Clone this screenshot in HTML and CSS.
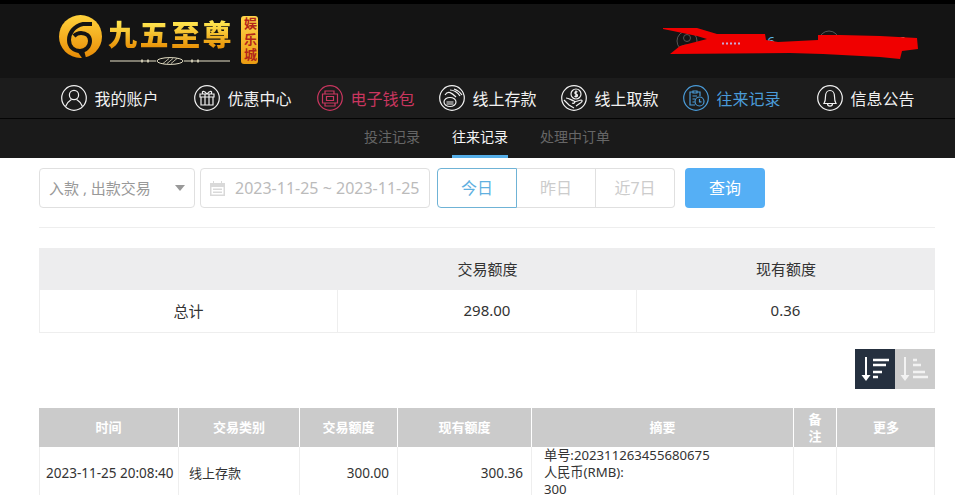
FILE: index.html
```html
<!DOCTYPE html>
<html lang="zh-CN">
<head>
    <meta charset="UTF-8">
    <title>往来记录</title>
    <link rel="stylesheet" href="styles.css">
</head>
<body>
    <header class="top">
        <div class="brand">
            <svg class="brand-mark" viewBox="0 0 43 43" width="43" height="43">
                <defs>
                    <linearGradient id="gold" x1="0" y1="0" x2="0" y2="1">
                        <stop offset="0" stop-color="#ffd23c"/>
                        <stop offset="1" stop-color="#e88c06"/>
                    </linearGradient>
                </defs>
                <circle cx="21.5" cy="21.5" r="21.5" fill="url(#gold)"/>
                <path d="M33 9H24C15 11 10 18 10 25C10 32 15 36 21 36C27 36 31 31 31 26C31 21 27 18 22 18C19 18 17 19 15 21" fill="none" stroke="#141414" stroke-width="4"/>
                <path d="M18 36L23 43H27L25 35Z" fill="#141414"/>
            </svg>
            <div class="brand-name">
                <div class="brand-text">九五至尊</div>
                <svg class="brand-flourish" viewBox="0 0 124 8" width="124" height="8">
                    <path d="M2 4H48M76 4H122" stroke="#e8e2c8" stroke-width="1"/>
                    <path d="M34 2.500V5.500M40 2.500V5.500M84 2.500V5.500M90 2.500V5.500" stroke="#e8e2c8" stroke-width="1.500"/>
                    <ellipse cx="62" cy="4" rx="13" ry="3.400" fill="none" stroke="#e8e2c8" stroke-width="1"/>
                    <path d="M55 6.500L61 1.500M59 6.500L65 1.500M63 6.500L69 1.500" stroke="#e8e2c8" stroke-width="0.800"/>
                </svg>
            </div>
            <div class="brand-badge">娱乐城</div>
        </div>
        <div class="user-info">
            <svg class="user-icon" viewBox="0 0 22 22" width="22" height="22">
                <circle cx="11" cy="11" r="10" fill="none" stroke="#555"/>
                <circle cx="11" cy="8" r="3.500" fill="none" stroke="#555"/>
                <path d="M4 18C5 14 17 14 18 18" fill="none" stroke="#555"/>
            </svg>
            <span class="user-name">c.....6</span>
            <svg class="user-icon user-icon-wallet" viewBox="0 0 22 22" width="22" height="22">
                <circle cx="11" cy="11" r="10" fill="none" stroke="#555"/>
            </svg>
            <span class="user-money">0.36</span>
        </div>
        <svg class="scribble" viewBox="660 24 262 38" width="262" height="38">
            <path d="M663 28L697 28L717 34L765 34L766 40L778 42L818 40L818 35L840 35L880 36L917 38L918 49L902 51L900 59L880 57L823 54L790 53L670 54L680 46L707 39L697 36L673 31L663 29Z" fill="#f00000"/>
            <path d="M722 43.500H741" stroke="#c9a8d4" stroke-width="2" stroke-dasharray="2 2"/>
        </svg>
    </header>

    <nav class="main-nav">
        <a class="nav-item" href="#">
            <svg viewBox="0 0 26 26" width="26" height="26">
                <circle cx="13" cy="13" r="12.300"/>
                <circle cx="13" cy="10" r="4.600"/>
                <path d="M4.500 21.500C6 17 9 15.500 10.500 14.500M21.500 21.500C20 17 17 15.500 15.500 14.500"/>
            </svg>
            我的账户
        </a>
        <a class="nav-item" href="#">
            <svg viewBox="0 0 26 26" width="26" height="26">
                <circle cx="13" cy="13" r="12.300"/>
                <path d="M6 9H20V12H6ZM7 12V20H19V12M11 9V20M15 9V20M13 9C10 5 7 6 9 9M13 9C16 5 19 6 17 9"/>
            </svg>
            优惠中心
        </a>
        <a class="nav-item nav-item-wallet" href="#">
            <svg viewBox="0 0 26 26" width="26" height="26">
                <circle cx="13" cy="13" r="12.300"/>
                <path d="M8 9V6H17V9M5.500 9H20.500V18H5.500ZM8 18V21H18V18M9.500 11.500H16.500V15.500H9.500Z"/>
            </svg>
            电子钱包
        </a>
        <a class="nav-item" href="#">
            <svg viewBox="0 0 26 26" width="26" height="26">
                <circle cx="13" cy="13" r="12.300"/>
                <ellipse cx="11" cy="17" rx="6" ry="4.500"/>
                <path d="M7.500 17H14.500M7.500 19H14.500M6 10C9 5 13 8 17 12M11 5C14 5 19 7 21 11M15 4C18 5 21 7 23 10"/>
            </svg>
            线上存款
        </a>
        <a class="nav-item" href="#">
            <svg viewBox="0 0 26 26" width="26" height="26">
                <circle cx="13" cy="13" r="12.300"/>
                <circle cx="15" cy="9" r="5"/>
                <path d="M16.500 7C15 6 13.500 7 14 8.500C15 9.500 17 9 16.500 11C15.500 12 14 11.500 13.500 11M15 5.500V12.500M3 15L8 20L13 23M5 13C8 13 10 15 13 16C15 17 13 19 11 18M13 17L20 15C21 15 22 16 20 17.500L15 21"/>
            </svg>
            线上取款
        </a>
        <a class="nav-item nav-item-active" href="#">
            <svg viewBox="0 0 26 26" width="26" height="26">
                <circle cx="13" cy="13" r="12.300"/>
                <path d="M10 6H14V8H10ZM14 7H17V11M10 7H7V20H12M9.500 11H14M9.500 14H12M9.500 17H11.500"/>
                <circle cx="16.500" cy="16.500" r="4.500"/>
                <path d="M16.500 14V16.800H18.500"/>
            </svg>
            往来记录
        </a>
        <a class="nav-item" href="#">
            <svg viewBox="0 0 26 26" width="26" height="26">
                <circle cx="13" cy="13" r="12.300"/>
                <path d="M7 18.500C8 17 8.500 15 8.500 11.500C8.500 8 10.500 5.500 13 5.500C15.500 5.500 17.500 8 17.500 11.500C17.500 15 18 17 19 18.500ZM10.500 18.500C10.500 22 15.500 22 15.500 18.500"/>
            </svg>
            信息公告
        </a>
    </nav>

    <div class="sub-nav">
        <a href="#">投注记录</a>
        <a class="sub-active" href="#">往来记录</a>
        <a href="#">处理中订单</a>
    </div>

    <main class="content">
        <div class="filters">
            <div class="select-box">
                <span>入款 , 出款交易</span>
                <i class="caret"></i>
            </div>
            <div class="date-box">
                <svg viewBox="0 0 17 17" width="17" height="17">
                    <path d="M1 3H4V1H5V3H12V1H13V3H16V16H1ZM2.500 7V14.500H14.500V7Z" fill="#d9d9d9"/>
                    <path d="M4 8.500H13V10H4ZM4 11.500H13V13H4Z" fill="#d9d9d9"/>
                </svg>
                <span>2023-11-25 ~ 2023-11-25</span>
            </div>
            <div class="day-tabs">
                <button class="day-tab day-tab-on">今日</button>
                <button class="day-tab">昨日</button>
                <button class="day-tab">近7日</button>
            </div>
            <button class="search-btn">查询</button>
        </div>

        <table class="summary">
            <tr>
                <th></th>
                <th>交易额度</th>
                <th>现有额度</th>
            </tr>
            <tr>
                <td>总计</td>
                <td>298.00</td>
                <td>0.36</td>
            </tr>
        </table>

        <div class="sort-row">
            <button class="sort-btn sort-on">
                <svg viewBox="0 0 40 40" width="40" height="40">
                    <path d="M11 8V28" stroke="#fff" stroke-width="2"/>
                    <path d="M6.500 26H15.500L11 32Z" fill="#fff"/>
                    <path d="M18 11H34M18 16H31M18 23H27M18 28H23" stroke="#fff" stroke-width="2.400"/>
                </svg>
            </button>
            <button class="sort-btn">
                <svg viewBox="0 0 40 40" width="40" height="40">
                    <path d="M10 8V28" stroke="#f2f2f2" stroke-width="2"/>
                    <path d="M5.500 26H14.500L10 32Z" fill="#f2f2f2"/>
                    <path d="M18 11H22M18 16H26M18 23H30M18 28H33" stroke="#f2f2f2" stroke-width="2.400"/>
                </svg>
            </button>
        </div>

        <table class="records">
            <colgroup>
                <col class="col-time">
                <col class="col-type">
                <col class="col-amount">
                <col class="col-balance">
                <col class="col-note">
                <col class="col-remark">
                <col class="col-more">
            </colgroup>
            <tr>
                <th>时间</th>
                <th>交易类别</th>
                <th>交易额度</th>
                <th>现有额度</th>
                <th>摘要</th>
                <th>备注</th>
                <th>更多</th>
            </tr>
            <tr>
                <td class="cell-time">2023-11-25 20:08:40</td>
                <td class="cell-type">线上存款</td>
                <td class="cell-num">300.00</td>
                <td class="cell-num">300.36</td>
                <td class="cell-note">单号:202311263455680675<br>人民币(RMB):<br>300</td>
                <td></td>
                <td></td>
            </tr>
        </table>
    </main>
</body>
</html>
```

FILE: styles.css
```css
* {
    margin: 0;
    padding: 0;
    box-sizing: border-box;
}
html, body {
    height: 495px;
    overflow: hidden;
}
body {
    font-family: "Noto Sans", "Noto Sans CJK SC", sans-serif;
    font-size: 14px;
    color: #333;
    background: #fff;
}
a {
    text-decoration: none;
}
button {
    font-family: inherit;
    background: none;
    border: none;
}

/* header */
.top {
    position: relative;
    height: 78px;
    padding: 11px 20px 0 59px;
    display: flex;
    justify-content: space-between;
    background: #141414;
    border-top: 4px solid #000;
}
.brand {
    display: flex;
    align-items: flex-start;
}
.brand-name {
    margin-left: 6px;
    width: 124px;
    display: flex;
    flex-direction: column;
}
.brand-text {
    margin-top: 1px;
    font-size: 29px;
    font-weight: 900;
    line-height: 38px;
    letter-spacing: 2.500px;
    white-space: nowrap;
    background: linear-gradient(#ffe34d 20%, #e9950a 80%);
    -webkit-background-clip: text;
    background-clip: text;
    color: transparent;
}
.brand-flourish {
    margin-top: 3px;
}
.brand-badge {
    width: 17px;
    height: 48px;
    margin: 1px 0 0 9px;
    border-radius: 3px;
    background: linear-gradient(#ffd54a, #eb9c12);
    color: #b3261a;
    font-size: 13px;
    font-weight: 700;
    line-height: 17px;
    letter-spacing: 2.500px;
    text-align: center;
    writing-mode: vertical-rl;
}
.user-info {
    display: flex;
    align-items: center;
    width: 259px;
    height: 22px;
    margin-top: 15px;
    font-size: 14px;
    color: #5cb6e6;
    white-space: nowrap;
}
.user-name {
    width: 77px;
    text-align: right;
}
.user-money {
    margin-left: 38px;
    color: #ccc;
}
.user-icon {
    display: block;
    flex: none;
}
.user-icon-wallet {
    margin-left: 43px;
}
.scribble {
    position: absolute;
    left: 660px;
    top: 20px;
}

/* nav */
.main-nav {
    height: 41px;
    padding-left: 61px;
    display: grid;
    grid-template-columns: 133px 123px 122px 122px 122px 134px auto;
    align-items: center;
    background: #1c1c1c;
    border-bottom: 1px solid #050505;
}
.nav-item {
    display: flex;
    align-items: center;
    gap: 7.500px;
    color: #f1f1f1;
    font-size: 16px;
    white-space: nowrap;
}
.nav-item svg {
    fill: none;
    stroke: currentColor;
    stroke-width: 1.200;
    flex: none;
}
.nav-item-wallet {
    color: #c9365f;
}
.nav-item-active {
    color: #4a9bd8;
}
.sub-nav {
    height: 39px;
    padding-left: 364px;
    display: flex;
    gap: 32px;
    background: #1a1a1a;
}
.sub-nav a {
    line-height: 36px;
    color: #666;
    font-size: 14px;
    border-bottom: 3px solid transparent;
}
.sub-nav .sub-active {
    color: #f5f5f5;
    border-bottom-color: #55aee8;
}

/* filters */
.content {
    padding: 10px 20px 0 39px;
}
.filters {
    display: flex;
    height: 60px;
    padding-bottom: 19px;
    border-bottom: 1px solid #eee;
}
.select-box, .date-box {
    height: 40px;
    display: flex;
    align-items: center;
    border: 1px solid #e0e0e0;
    border-radius: 4px;
    color: #999;
}
.select-box {
    width: 156px;
    padding: 0 9px 2px;
    font-size: 15px;
    justify-content: space-between;
    white-space: nowrap;
}
.caret {
    width: 0;
    height: 0;
    margin-top: 2px;
    border: 5px solid transparent;
    border-top: 6px solid #999;
    border-bottom: 0;
}
.date-box {
    width: 230px;
    margin-left: 5px;
    padding-left: 8px;
    gap: 9px;
    font-size: 16px;
    color: #bbb;
    white-space: nowrap;
}
.date-box svg {
    flex: none;
}
.day-tabs {
    display: flex;
    margin-left: 7px;
}
.day-tab {
    width: 79px;
    height: 40px;
    padding-bottom: 2px;
    font-size: 16px;
    color: #ccc;
    border: 1px solid #e0e0e0;
    border-left: 0;
}
.day-tab:last-child {
    border-radius: 0 4px 4px 0;
}
.day-tab-on {
    width: 80px;
    color: #5fb0e0;
    border: 1px solid #6fb3d6;
    border-radius: 4px 0 0 4px;
}
.search-btn {
    width: 80px;
    height: 40px;
    margin-left: 10px;
    padding-bottom: 2px;
    font-size: 16px;
    color: #fff;
    background: #55aff5;
    border-radius: 4px;
}

/* tables */
table {
    width: 896px;
    border-collapse: separate;
    border-spacing: 0;
    table-layout: fixed;
}
td {
    border-right: 1px solid #eee;
    border-bottom: 1px solid #eee;
}
td:first-child {
    border-left: 1px solid #eee;
}
.summary {
    margin-top: 20px;
    font-size: 15px;
}
.summary th {
    height: 42px;
    padding-bottom: 2px;
    font-weight: 400;
    background: #ededee;
    color: #333;
}
.summary th:first-child, .summary th:nth-child(2) {
    width: 299px;
}
.summary td {
    height: 43px;
    padding-bottom: 2px;
    text-align: center;
}

/* sort buttons */
.sort-row {
    display: flex;
    justify-content: flex-end;
    width: 896px;
    margin-top: 16px;
}
.sort-btn {
    width: 40px;
    height: 40px;
    background: #cbcbcb;
}
.sort-btn svg {
    display: block;
}
.sort-on {
    background: #25303f;
}

/* records table */
.records {
    margin-top: 19px;
}
.col-time { width: 140px; }
.col-type { width: 121px; }
.col-amount { width: 98px; }
.col-balance { width: 134px; }
.col-note { width: 262px; }
.col-remark { width: 43px; }
.col-more { width: 98px; }
.records th {
    height: 39px;
    padding: 0 12px;
    line-height: 17px;
    font-size: 13px;
    font-weight: 700;
    color: #fff;
    background: #cbcbcb;
    border-right: 1px solid #fff;
}
.records th:last-child {
    border-right: 0;
}
.records td {
    padding: 0 12px;
    font-size: 13.500px;
    line-height: 17px;
    vertical-align: middle;
}
.records .cell-time {
    padding: 0 0 0 6px;
    white-space: nowrap;
}
.records .cell-type {
    padding-left: 10px;
    font-size: 13px;
}
.records .cell-num {
    padding-right: 8px;
    text-align: right;
}
.records .cell-note {
    padding-bottom: 1px;
    font-size: 13.200px;
}
```
